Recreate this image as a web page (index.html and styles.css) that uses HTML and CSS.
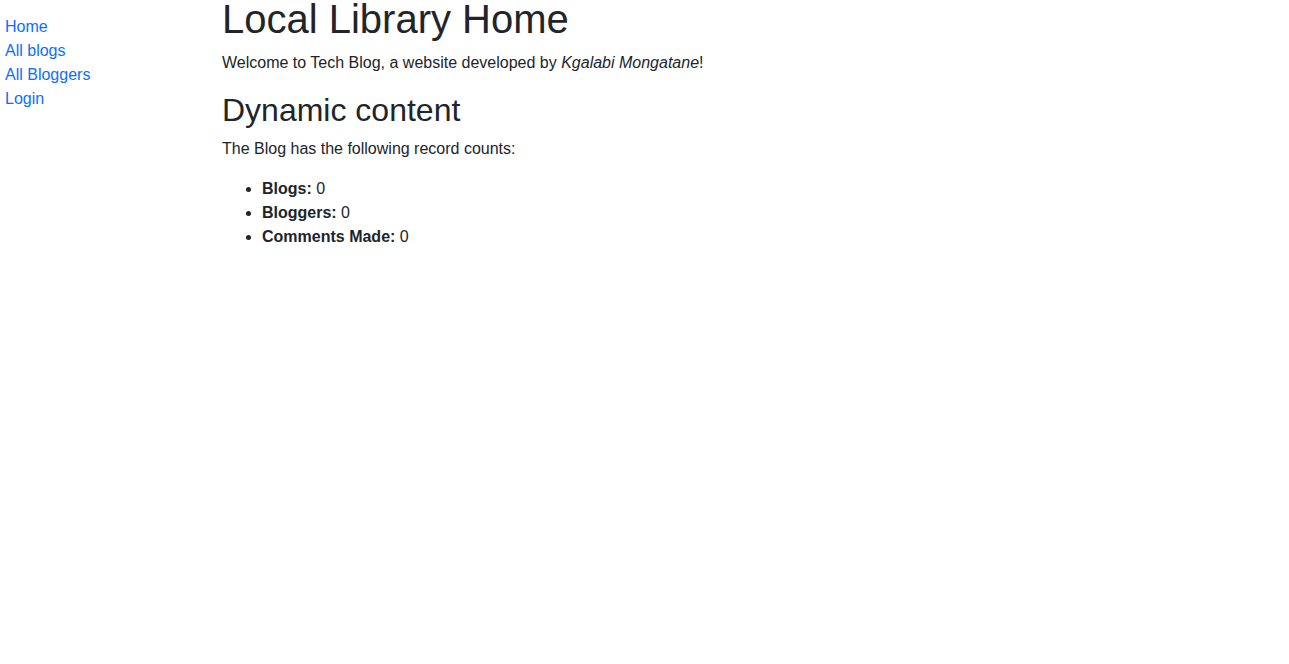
FILE: index.html
```html
<!DOCTYPE html>
<html lang="en">
<head>
<meta charset="utf-8">
<title>Local Library</title>
<link rel="stylesheet" href="styles.css">
</head>
<body>
<div class="page">
  <aside class="sidebar">
    <ul class="sidebar-nav">
      <li><a href="#">Home</a></li>
      <li><a href="#">All blogs</a></li>
      <li><a href="#">All Bloggers</a></li>
      <li><a href="#">Login</a></li>
    </ul>
  </aside>
  <main class="content">
    <h1>Local Library Home</h1>
    <p>Welcome to Tech Blog, a website developed by <em>Kgalabi Mongatane</em>!</p>
    <h2>Dynamic content</h2>
    <p>The Blog has the following record counts:</p>
    <ul class="counts">
      <li><strong>Blogs:</strong> 0</li>
      <li><strong>Bloggers:</strong> 0</li>
      <li><strong>Comments Made:</strong> 0</li>
    </ul>
  </main>
</div>
</body>
</html>
```
FILE: styles.css
```css
html, body {
  margin: 0;
  padding: 0;
  background: #fff;
}
body {
  font-family: "Liberation Sans", Arial, sans-serif;
  font-size: 16px;
  line-height: 1.5;
  color: #212529;
}
.page {
  display: flex;
  margin-top: -5px;
}
.sidebar {
  box-sizing: border-box;
  width: 222px;
  flex: 0 0 222px;
  padding-left: 5px;
}
.sidebar-nav {
  margin: 20px 0 0 0;
  padding: 0;
  list-style: none;
}
.sidebar-nav a {
  color: #0d6efd;
  text-decoration: none;
}
.content {
  flex: 1;
}
h1, h2 {
  margin: 0 0 8px 0;
  font-weight: 500;
  line-height: 1.2;
}
h1 {
  font-size: 40px;
}
h2 {
  font-size: 32px;
}
p {
  margin: 0 0 16px 0;
}
.counts {
  margin: 0 0 16px 0;
  padding-left: 40px;
}
strong {
  font-weight: 700;
}
```
